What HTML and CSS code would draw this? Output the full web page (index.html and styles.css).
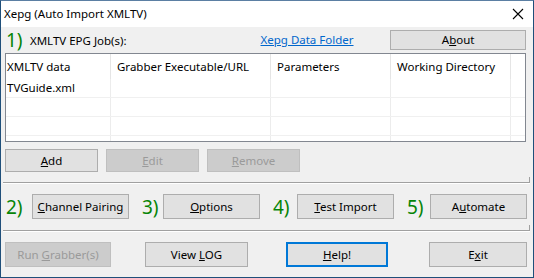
FILE: index.html
```html
<!DOCTYPE html>
<html lang="en">
<head>
  <meta charset="UTF-8">
  <meta name="viewport" content="width=device-width, initial-scale=1.0">
  <title>Xepg (Auto Import XMLTV)</title>
  <link rel="stylesheet" href="styles.css">
</head>
<body>
<div class="window">
  <div class="titlebar">
    <span class="title">Xepg (Auto Import XMLTV)</span>
    <svg class="close" width="12" height="12" viewBox="0 0 12 12">
      <path d="M1 1 L11 11 M11 1 L1 11" stroke="#000" stroke-width="1.1" fill="none"/>
    </svg>
  </div>

  <div class="content">
    <div class="jobs-row">
      <span class="step step-one">1)</span>
      <span class="jobs-label">XMLTV EPG <u>J</u>ob(s):</span>
      <a class="folder-link" href="#">Xepg Data Folder</a>
      <button class="btn about-btn">A<u>b</u>out</button>
    </div>

    <div class="listview">
      <div class="lv-row lv-head">
        <div class="cell first">XMLTV data</div>
        <div class="cell">Grabber Executable/URL</div>
        <div class="cell">Parameters</div>
        <div class="cell">Working Directory</div>
        <div class="cell last"></div>
      </div>
      <div class="lv-row">
        <div class="cell first">TVGuide.xml</div>
        <div class="cell"></div>
        <div class="cell"></div>
        <div class="cell"></div>
        <div class="cell last"></div>
      </div>
      <div class="lv-row">
        <div class="cell first"></div>
        <div class="cell"></div>
        <div class="cell"></div>
        <div class="cell"></div>
        <div class="cell last"></div>
      </div>
      <div class="lv-row">
        <div class="cell first"></div>
        <div class="cell"></div>
        <div class="cell"></div>
        <div class="cell"></div>
        <div class="cell last"></div>
      </div>
      <div class="lv-row">
        <div class="cell first"></div>
        <div class="cell"></div>
        <div class="cell"></div>
        <div class="cell"></div>
        <div class="cell last"></div>
      </div>
    </div>

    <div class="job-buttons">
      <button class="btn job-btn"><u>A</u>dd</button>
      <button class="btn job-btn" disabled><u>E</u>dit</button>
      <button class="btn job-btn" disabled><u>R</u>emove</button>
    </div>

    <div class="separator sep-top"></div>

    <div class="steps-row">
      <div class="step-group">
        <span class="step" style="width: 26px">2)</span>
        <button class="btn step-btn"><u>C</u>hannel Pairing</button>
      </div>
      <div class="step-group">
        <span class="step" style="width: 21px">3)</span>
        <button class="btn step-btn"><u>O</u>ptions</button>
      </div>
      <div class="step-group">
        <span class="step" style="width: 24px">4)</span>
        <button class="btn step-btn"><u>T</u>est Import</button>
      </div>
      <div class="step-group">
        <span class="step" style="width: 23px">5)</span>
        <button class="btn step-btn">A<u>u</u>tomate</button>
      </div>
    </div>

    <div class="separator sep-bottom"></div>

    <div class="action-row">
      <button class="btn run-btn" disabled>Run <u>G</u>rabber(s)</button>
      <button class="btn log-btn">View <u>L</u>OG</button>
      <button class="btn help-btn"><u>H</u>elp!</button>
      <button class="btn exit-btn">E<u>x</u>it</button>
    </div>
  </div>
</div>
</body>
</html>
```

FILE: styles.css
```css
html, body {
  margin: 0;
  padding: 0;
  background: #f0f0f0;
}
body {
  font-family: 'Segoe UI', 'Noto Sans', sans-serif;
  font-size: 11.5px;
  color: #000;
}
.window {
  width: 534px;
  height: 278px;
  box-sizing: border-box;
  border: 1px solid #1f4f7a;
  border-top-color: #5b7fa3;
  background: #f0f0f0;
  display: flex;
  flex-direction: column;
}
.titlebar {
  height: 26px;
  flex: none;
  background: #fff;
  display: flex;
  align-items: center;
  justify-content: space-between;
  padding: 0 9px 0 3px;
}
.title {
  font-size: 11.5px;
  line-height: 26px;
}
.close {
  display: block;
}
.content {
  flex: 1;
  padding: 0 7px 0 4px;
  display: flex;
  flex-direction: column;
}

/* top row */
.jobs-row {
  height: 25px;
  display: flex;
  align-items: center;
}
.step {
  color: #068406;
  font-size: 19px;
  line-height: 20px;
  display: inline-block;
  padding-left: 1px;
  box-sizing: border-box;
}
.step-one {
  width: 25px;
}
.jobs-label {
  width: 231px;
  padding-top: 2px;
}
.folder-link {
  color: #0066cc;
  text-decoration: underline;
  width: 130px;
}
.btn {
  font-family: inherit;
  font-size: 11.5px;
  color: #000;
  background: #e1e1e1;
  border: 1px solid #adadad;
  padding: 0;
  margin: 0;
  box-sizing: border-box;
}
.btn:disabled {
  background: #cccccc;
  border-color: #bfbfbf;
  color: #9a9a9a;
}
.about-btn {
  width: 136px;
  height: 20px;
  margin-left: auto;
}

/* list */
.listview {
  margin-top: 1px;
  height: 89px;
  box-sizing: border-box;
  border: 1px solid #828790;
  background: #fff;
  overflow: hidden;
}
.lv-row {
  display: grid;
  grid-template-columns: 105px 160px 120px 120px 1fr;
  height: 19px;
  box-sizing: border-box;
  border-bottom: 1px solid #f0f0f0;
}
.lv-head {
  height: 25px;
  border-bottom: none;
}
.cell {
  border-right: 1px solid #ececec;
  padding-left: 6px;
  line-height: 18px;
  white-space: nowrap;
  overflow: hidden;
}
.lv-head .cell {
  line-height: 25px;
  border-right-color: #e5e5e5;
}
.cell.first {
  padding-left: 1px;
}
.cell.last {
  border-right: none;
}

/* buttons under list */
.job-buttons {
  margin-top: 7px;
  display: flex;
  gap: 8px;
}
.job-btn {
  width: 93px;
  height: 23px;
}

/* etched separators with a tick at the right end */
.separator {
  height: 6px;
  box-sizing: border-box;
  margin-left: -2px;
  margin-right: -4px;
  border-bottom: 1px solid #a0a0a0;
  border-right: 1px solid #a0a0a0;
  box-shadow: 0 1px 0 #fff;
}
.sep-top {
  margin-top: 5px;
}
.sep-bottom {
  margin-top: 6px;
}

.steps-row {
  margin-top: 11px;
  display: flex;
  justify-content: space-between;
  padding-left: 1px;
  margin-right: -1px;
}
.step-group {
  display: flex;
  align-items: center;
}
.steps-row .step {
  padding-left: 0;
}
.step-btn {
  width: 97px;
  height: 25px;
}

.action-row {
  margin-top: 11px;
  display: flex;
  margin-right: -1px;
}
.action-row .btn {
  height: 25px;
}
.run-btn {
  width: 106px;
}
.log-btn {
  width: 103px;
  margin-left: 34px;
}
.help-btn {
  width: 102px;
  margin-left: 38px;
  border: 2px solid #0078d7;
}
.exit-btn {
  width: 98px;
  margin-left: auto;
}
```
